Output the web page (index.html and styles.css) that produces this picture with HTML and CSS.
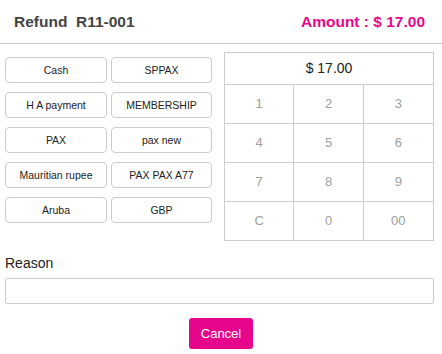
FILE: index.html
```html
<!DOCTYPE html>
<html lang="en">
<head>
    <meta charset="UTF-8">
    <meta name="viewport" content="width=device-width, initial-scale=1.0">
    <title>Refund</title>
    <link rel="stylesheet" href="styles.css">
</head>
<body>
    <div class="header">
        <div class="title">Refund&nbsp; R11-001</div>
        <div class="amount">Amount : $ 17.00</div>
    </div>

    <div class="content">
        <div class="tenders">
            <button class="tender">Cash</button>
            <button class="tender">SPPAX</button>
            <button class="tender">H A payment</button>
            <button class="tender">MEMBERSHIP</button>
            <button class="tender">PAX</button>
            <button class="tender">pax new</button>
            <button class="tender">Mauritian rupee</button>
            <button class="tender">PAX PAX A77</button>
            <button class="tender">Aruba</button>
            <button class="tender">GBP</button>
        </div>

        <div class="keypad">
            <div class="display">$ 17.00</div>
            <div class="keys">
                <div class="key">1</div>
                <div class="key">2</div>
                <div class="key">3</div>
                <div class="key">4</div>
                <div class="key">5</div>
                <div class="key">6</div>
                <div class="key">7</div>
                <div class="key">8</div>
                <div class="key">9</div>
                <div class="key">C</div>
                <div class="key">0</div>
                <div class="key">00</div>
            </div>
        </div>
    </div>

    <div class="reason">
        <label for="reason">Reason</label>
        <input type="text" id="reason" name="reason">
    </div>

    <div class="actions">
        <button class="cancel">Cancel</button>
    </div>
</body>
</html>
```

FILE: styles.css
```css
body {
    margin: 0;
    font-family: "Liberation Sans", Arial, sans-serif;
    color: #333;
    background: #fff;
}

.header {
    display: flex;
    justify-content: space-between;
    align-items: center;
    height: 43px;
    padding: 0 17px 0 14px;
    border-bottom: 1px solid #ccc;
    font-weight: bold;
    font-size: 15.5px;
}

.header .title {
    color: #444;
}

.header .amount {
    color: #e6068c;
}

.content {
    display: flex;
    align-items: flex-start;
    gap: 12px;
    padding: 8px 8px 0 5px;
}

.tenders {
    display: grid;
    grid-template-columns: 102px 101px;
    column-gap: 4px;
    row-gap: 9px;
    margin-top: 5px;
}

.tender {
    height: 26px;
    padding: 0;
    border: 1px solid #ccc;
    border-radius: 4px;
    background: #fff;
    font-family: "Liberation Sans", Arial, sans-serif;
    font-size: 10.5px;
    color: #222;
}

.keypad {
    width: 208px;
    border: 1px solid #ccc;
}

.display {
    height: 31px;
    line-height: 31px;
    text-align: center;
    font-size: 14px;
    color: #222;
    border-bottom: 1px solid #ccc;
}

.keys {
    display: grid;
    grid-template-columns: repeat(3, 1fr);
}

.key {
    height: 38px;
    line-height: 38px;
    text-align: center;
    font-size: 13px;
    color: #a0a0a0;
    border-right: 1px solid #ccc;
    border-bottom: 1px solid #ccc;
}

.key:nth-child(3n) {
    border-right: none;
}

.key:nth-last-child(-n+3) {
    border-bottom: none;
}

.reason {
    display: flex;
    flex-direction: column;
    gap: 6px;
    padding: 13px 8px 0 5px;
}

.reason label {
    font-size: 14px;
    line-height: 18px;
    color: #222;
}

.reason input {
    height: 26px;
    box-sizing: border-box;
    border: 1px solid #ccc;
    border-radius: 2px;
}

.actions {
    display: flex;
    justify-content: center;
    padding-top: 14px;
}

.cancel {
    width: 64px;
    height: 31px;
    border: none;
    border-radius: 3px;
    background: #e6068c;
    color: #fff;
    font-family: "Liberation Sans", Arial, sans-serif;
    font-size: 13px;
}
```
